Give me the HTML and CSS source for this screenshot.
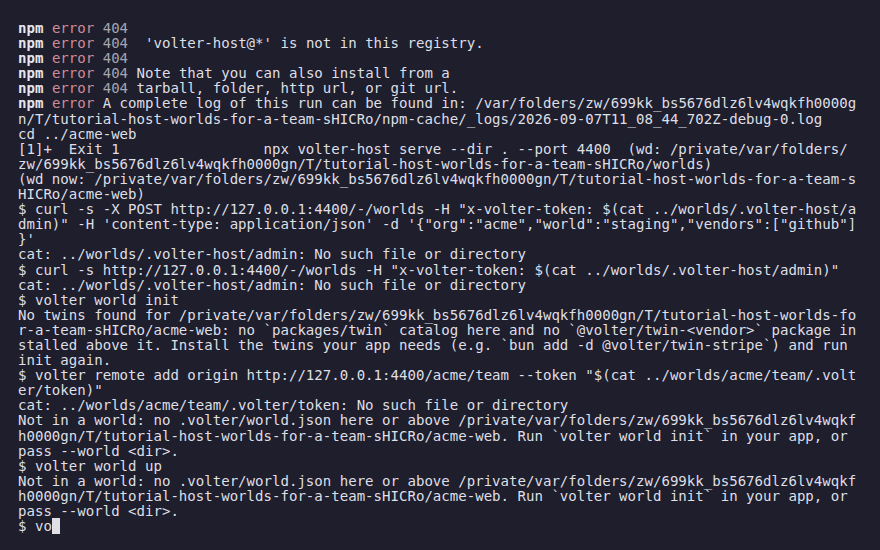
FILE: index.html
```html
<!DOCTYPE html>
<html>
<head>
<meta charset="utf-8">
<link rel="stylesheet" href="styles.css">
</head>
<body>
<pre class="term"><span class="npm">npm</span> <span class="err">error</span> <span class="code">404</span>
<span class="npm">npm</span> <span class="err">error</span> <span class="code">404</span>  'volter-host@*' is not in this registry.
<span class="npm">npm</span> <span class="err">error</span> <span class="code">404</span>
<span class="npm">npm</span> <span class="err">error</span> <span class="code">404</span> Note that you can also install from a
<span class="npm">npm</span> <span class="err">error</span> <span class="code">404</span> tarball, folder, http url, or git url.
<span class="npm">npm</span> <span class="err">error</span> A complete log of this run can be found in: /var/folders/zw/699kk_bs5676dlz6lv4wqkfh0000g
n/T/tutorial-host-worlds-for-a-team-sHICRo/npm-cache/_logs/2026-09-07T11_08_44_702Z-debug-0.log
cd ../acme-web
[1]+  Exit 1                 npx volter-host serve --dir . --port 4400  (wd: /private/var/folders/
zw/699kk_bs5676dlz6lv4wqkfh0000gn/T/tutorial-host-worlds-for-a-team-sHICRo/worlds)
(wd now: /private/var/folders/zw/699kk_bs5676dlz6lv4wqkfh0000gn/T/tutorial-host-worlds-for-a-team-s
HICRo/acme-web)
$ curl -s -X POST http://127.0.0.1:4400/-/worlds -H "x-volter-token: $(cat ../worlds/.volter-host/a
dmin)" -H 'content-type: application/json' -d '{"org":"acme","world":"staging","vendors":["github"]
}'
cat: ../worlds/.volter-host/admin: No such file or directory
$ curl -s http://127.0.0.1:4400/-/worlds -H "x-volter-token: $(cat ../worlds/.volter-host/admin)"
cat: ../worlds/.volter-host/admin: No such file or directory
$ volter world init
No twins found for /private/var/folders/zw/699kk_bs5676dlz6lv4wqkfh0000gn/T/tutorial-host-worlds-fo
r-a-team-sHICRo/acme-web: no `packages/twin` catalog here and no `@volter/twin-&lt;vendor&gt;` package in
stalled above it. Install the twins your app needs (e.g. `bun add -d @volter/twin-stripe`) and run
init again.
$ volter remote add origin http://127.0.0.1:4400/acme/team --token "$(cat ../worlds/acme/team/.volt
er/token)"
cat: ../worlds/acme/team/.volter/token: No such file or directory
Not in a world: no .volter/world.json here or above /private/var/folders/zw/699kk_bs5676dlz6lv4wqkf
h0000gn/T/tutorial-host-worlds-for-a-team-sHICRo/acme-web. Run `volter world init` in your app, or
pass --world &lt;dir&gt;.
$ volter world up
Not in a world: no .volter/world.json here or above /private/var/folders/zw/699kk_bs5676dlz6lv4wqkf
h0000gn/T/tutorial-host-worlds-for-a-team-sHICRo/acme-web. Run `volter world init` in your app, or
pass --world &lt;dir&gt;.
$ vo<span class="cursor"> </span></pre>
</body>
</html>
```

FILE: styles.css
```css
html, body {
  margin: 0;
  padding: 0;
  background: #1e1e2c;
  width: 880px;
  height: 550px;
  overflow: hidden;
}
.term {
  margin: 0;
  padding: 21px 0 0 18px;
  font-family: "DejaVu Sans Mono", "Liberation Mono", monospace;
  font-size: 14.07px;
  line-height: 15.1px;
  color: #dfdfe6;
  white-space: pre;
}
.npm {
  font-weight: bold;
  color: #e6e6ee;
}
.err {
  color: #cf8c98;
}
.code {
  color: #a4a5b0;
}
.cursor {
  background: #dfdfe6;
}
```
